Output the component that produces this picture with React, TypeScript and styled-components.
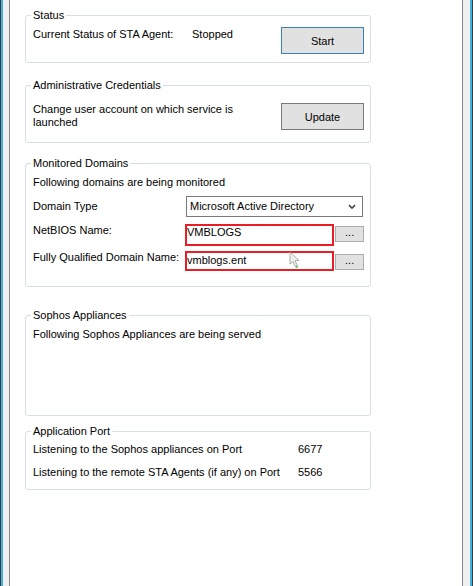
import React from "react";
import styled, { createGlobalStyle } from "styled-components";

const Global = createGlobalStyle`
  html, body { margin: 0; padding: 0; background: #ffffff; }
  body { font-family: "Liberation Sans", Arial, sans-serif; font-size: 11px; color: #000; }
  * { box-sizing: border-box; }
`;

const Window = styled.div`
  position: relative;
  display: flex;
  width: 473px;
  height: 586px;
  background: #f0f0f0;
  border-left: 1px solid #3a3a3a;
  border-right: 1px solid #3a3a3a;
`;

const Accent = styled.div`
  flex: 1;
  display: flex;
  border-left: 2px solid #3fb1e0;
  border-right: 2px solid #3fb1e0;
  padding: 0 7px 0 6px;
`;

const Panel = styled.div`
  flex: 1;
  display: flex;
  flex-direction: column;
  background: #ffffff;
  border-left: 1px solid #828790;
  border-right: 1px solid #828790;
  padding: 15px 0 0 15px;
`;

const GroupBox = styled.div<{ $height: number; $mt: number }>`
  position: relative;
  width: 346px;
  height: ${(p) => p.$height}px;
  margin-top: ${(p) => p.$mt}px;
  border: 1px solid #d5dfe5;
  border-radius: 3px;
  padding: ${(p) => "0"} 6px 0 7px;
  display: flex;
  flex-direction: column;
`;

const Legend = styled.div`
  position: absolute;
  top: -7px;
  left: 5px;
  padding: 0 2px;
  background: #ffffff;
  line-height: 13px;
  white-space: nowrap;
`;

const Row = styled.div<{ $pt?: number; $mt?: number; $height?: number }>`
  display: flex;
  align-items: flex-start;
  padding-top: ${(p) => p.$pt ?? 0}px;
  margin-top: ${(p) => p.$mt ?? 0}px;
  ${(p) => (p.$height ? `height: ${p.$height}px;` : "")}
`;

const Text = styled.div<{ $width?: number; $mt?: number }>`
  line-height: 13px;
  white-space: nowrap;
  margin-top: ${(p) => p.$mt ?? 0}px;
  ${(p) => (p.$width ? `width: ${p.$width}px; flex: none;` : "")}
`;

const Button = styled.button<{ $focused?: boolean }>`
  margin-left: auto;
  width: 83px;
  height: 27px;
  flex: none;
  background: #e1e1e1;
  border: 1px solid ${(p) => (p.$focused ? "#3c7fb1" : "#7a7a7a")};
  border-radius: 0;
  font-family: inherit;
  font-size: 11px;
  color: #000;
  padding: 0;
`;

const Select = styled.div`
  display: flex;
  align-items: center;
  width: 177px;
  height: 21px;
  margin-left: 1px;
  border: 1px solid #7a7a7a;
  background: #fff;
  padding: 0 6px 0 3px;
  line-height: 13px;
  justify-content: space-between;
`;

const Field = styled.div<{ $pt: number }>`
  width: 151px;
  height: 100%;
  border: 2px solid #ec1c24;
  background: #fff;
  padding-top: ${(p) => p.$pt}px;
  line-height: 13px;
`;

const DotsButton = styled.div<{ $mt: number }>`
  width: 29px;
  height: 16px;
  margin-left: 1px;
  margin-top: ${(p) => p.$mt}px;
  background: #e1e1e1;
  border: 1px solid #adadad;
  text-align: center;
  line-height: 11px;
  font-size: 11px;
`;

const Cursor = styled.svg`
  position: absolute;
  left: 288px;
  top: 251px;
`;

export default function App() {
  return (
    <>
      <Global />
      <Window>
        <Accent>
          <Panel>
            <GroupBox $height={48} $mt={0}>
              <Legend>Status</Legend>
              <Row $pt={11}>
                <Text $width={159} $mt={1}>Current Status of STA Agent:</Text>
                <Text $mt={1}>Stopped</Text>
                <Button $focused>Start</Button>
              </Row>
            </GroupBox>

            <GroupBox $height={58} $mt={22}>
              <Legend>Administrative Credentials</Legend>
              <Row $pt={17}>
                <Text>
                  Change user account on which service is
                  <br />
                  launched
                </Text>
                <Button>Update</Button>
              </Row>
            </GroupBox>

            <GroupBox $height={124} $mt={20}>
              <Legend>Monitored Domains</Legend>
              <Row $pt={12}>
                <Text>Following domains are being monitored</Text>
              </Row>
              <Row $mt={7} $height={21}>
                <Text $width={152} $mt={4}>Domain Type</Text>
                <Select>
                  <span>Microsoft Active Directory</span>
                  <svg width="8" height="6" viewBox="0 0 8 6">
                    <polyline points="1,1 4,4.2 7,1" fill="none" stroke="#3c3c3c" strokeWidth="1.6" />
                  </svg>
                </Select>
              </Row>
              <Row $mt={7} $height={22}>
                <Text $width={152}>NetBIOS Name:</Text>
                <Field $pt={0}>VMBLOGS</Field>
                <DotsButton $mt={2}>...</DotsButton>
              </Row>
              <Row $mt={5} $height={20}>
                <Text $width={152}>Fully Qualified Domain Name:</Text>
                <Field $pt={1}>vmblogs.ent</Field>
                <DotsButton $mt={3}>...</DotsButton>
              </Row>
            </GroupBox>

            <GroupBox $height={101} $mt={28}>
              <Legend>Sophos Appliances</Legend>
              <Row $pt={12}>
                <Text>Following Sophos Appliances are being served</Text>
              </Row>
            </GroupBox>

            <GroupBox $height={59} $mt={15}>
              <Legend>Application Port</Legend>
              <Row $pt={11}>
                <Text $width={265}>Listening to the Sophos appliances on Port</Text>
                <Text>6677</Text>
              </Row>
              <Row $mt={10}>
                <Text $width={265}>Listening to the remote STA Agents (if any) on Port</Text>
                <Text>5566</Text>
              </Row>
            </GroupBox>
          </Panel>
        </Accent>
        <Cursor width="11" height="18" viewBox="0 0 11 18">
          <path d="M1 1 L1 13 L4 10.5 L6.5 16 L8.5 15 L6 9.5 L10 9.5 Z" fill="#eef2ee" stroke="#9aa89a" strokeWidth="1" opacity="0.9" />
          <circle cx="7.8" cy="15.8" r="1" fill="#3cb34a" />
        </Cursor>
      </Window>
    </>
  );
}
